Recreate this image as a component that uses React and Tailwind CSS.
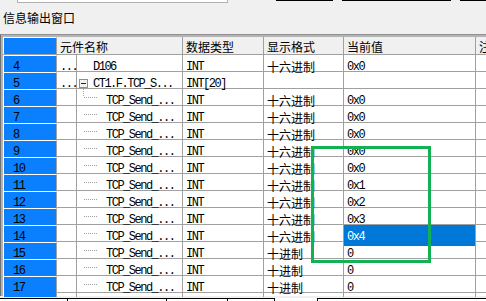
import React from "react";

const MONO = "font-['Liberation_Mono',monospace] text-[12px] tracking-[-1.5px]";
const CJK = "font-['Noto_Sans_CJK_SC',sans-serif] text-[12px]";
const COLS = "grid grid-cols-[54px_20px_106px_81px_80px_132px_10px]";

const vals = ["0x0", "0x0", "0x0", "0x0", "0x0", "0x1", "0x2", "0x3", "0x4"];

const rows = [
  { n: 4, dots: true, kind: "top", name: "D106", type: "INT", fmt: "十六进制", val: "0x0" },
  { n: 5, dots: true, kind: "parent", name: "CT1.F.TCP_S...", type: "INT[20]", fmt: "", val: "" },
  ...vals.map((v, i) => ({
    n: 6 + i, kind: i === 0 ? "first" : "child", name: "TCP_Send_...", type: "INT", fmt: "十六进制", val: v, sel: v === "0x4",
  })),
  ...[15, 16, 17].map((n) => ({ n, kind: "child", name: "TCP_Send_...", type: "INT", fmt: "十进制", val: "0" })),
];

function TreeLine({ first }) {
  return (
    <svg width="29" height="16" className="shrink-0">
      {first && <line x1="6.5" y1="0" x2="6.5" y2="8" stroke="#a0a0a0" strokeDasharray="1 1" />}
      <line x1="7" y1="8.5" x2="21" y2="8.5" stroke="#a0a0a0" strokeDasharray="1 1" />
    </svg>
  );
}

function MinusBox() {
  return (
    <svg width="9" height="9" className="ml-[2px] mr-[5px] mt-[1px] shrink-0">
      <rect x="0.5" y="0.5" width="8" height="8" fill="#f2f2f2" stroke="#8e8e8e" />
      <line x1="2" y1="4.5" x2="7" y2="4.5" stroke="#222" />
    </svg>
  );
}

function Row({ r }) {
  const cell = "flex items-center pt-[3px] border-r border-[#a0a0a0] overflow-hidden whitespace-nowrap";
  return (
    <div className={`${COLS} h-[17px] border-b border-[#a0a0a0] bg-white text-black`}>
      <div className={`bg-[#0a80fe] border-t border-l border-r border-t-white border-l-white border-r-[#a0a0a0] flex items-center pt-[2px] pl-[9px] ${MONO}`}>
        {r.n}
      </div>
      <div className={`${cell} pl-[3px] ${MONO}`}>{r.dots ? "..." : ""}</div>
      <div className={`flex items-stretch border-r border-[#a0a0a0] overflow-hidden whitespace-nowrap ${MONO}`}>
        {r.kind === "top" && <div className="w-[16px] shrink-0" />}
        {r.kind === "parent" && (
          <div className="flex items-center">
            <MinusBox />
          </div>
        )}
        {(r.kind === "first" || r.kind === "child") && <TreeLine first={r.kind === "first"} />}
        <div className="flex items-center pt-[3px]">{r.name}</div>
      </div>
      <div className={`${cell} pl-[3px] ${MONO}`}>{r.type}</div>
      <div className={`${cell} pl-[3px] ${CJK}`}>{r.fmt}</div>
      <div className={`${cell} pl-[3px] ${MONO} ${r.sel ? "bg-[#0078d7] text-white" : ""}`}>{r.val}</div>
      <div />
    </div>
  );
}

export default function App() {
  const head = `flex items-center pt-[2px] pl-[3px] border-r border-[#a0a0a0] whitespace-nowrap overflow-hidden ${CJK}`;
  return (
    <div className="relative w-[486px] h-[301px] overflow-hidden bg-[#f0f0f0] text-black">
      {/* controls above, cut off */}
      <div className="flex h-[3px] items-start">
        <div className="w-[17px]" />
        <div className="w-[211px] h-[3px] bg-white border-l border-r border-b border-[#b0b0b0]" />
        <div className="w-[48px]" />
        <div className="w-[57px] border-t border-black" />
        <div className="w-[9px]" />
        <div className="w-[109px] border-t border-black" />
        <div className="w-[9px]" />
        <div className="flex-1 border-t border-black" />
      </div>

      <div className={`h-[31px] flex items-center pl-[3px] pb-[1px] ${CJK}`}>信息输出窗口</div>

      {/* grid */}
      <div className="border-t border-l border-t-[#909090] border-l-[#707070]">
        <div className="border-t-2 border-l-2 border-[#b4b4b4]">
          <div className={`${COLS} h-[18px] border-b border-[#a0a0a0] bg-[#f0f0f0]`}>
            <div className="bg-[#0a80fe] border-t border-l border-r border-t-white border-l-white border-r-[#a0a0a0]" />
            <div className={`${head} col-span-2`}>元件名称</div>
            <div className={head}>数据类型</div>
            <div className={head}>显示格式</div>
            <div className={head}>当前值</div>
            <div className={`${head} border-r-0`}>注</div>
          </div>
          {rows.map((r) => (
            <Row key={r.n} r={r} />
          ))}
          <div className={`${COLS} h-[3px] bg-white`}>
            {[0, 1, 2, 3, 4, 5].map((i) => (
              <div key={i} className="border-r border-[#a0a0a0]" />
            ))}
            <div />
          </div>
        </div>
      </div>

      {/* tab strip */}
      <div className="h-[2px] bg-[#f0f0f0]" />
      <div className="flex h-[3px]">
        <div className="w-[68px] border-t border-r border-black bg-white" />
        <div className="w-[99px] border-t border-r border-[#000] bg-white" />
        <div className="w-[61px] border-t border-r border-black bg-white" />
        <div className="w-[47px] border-t border-r border-black bg-white" />
        <div className="w-[42px] bg-white" />
        <div className="flex-1 border-t border-l border-black bg-white" />
      </div>

      {/* annotation box */}
      <div className="absolute left-[311px] top-[146px] w-[120px] h-[117px] border-[3px] border-[#12b254]" />
    </div>
  );
}
